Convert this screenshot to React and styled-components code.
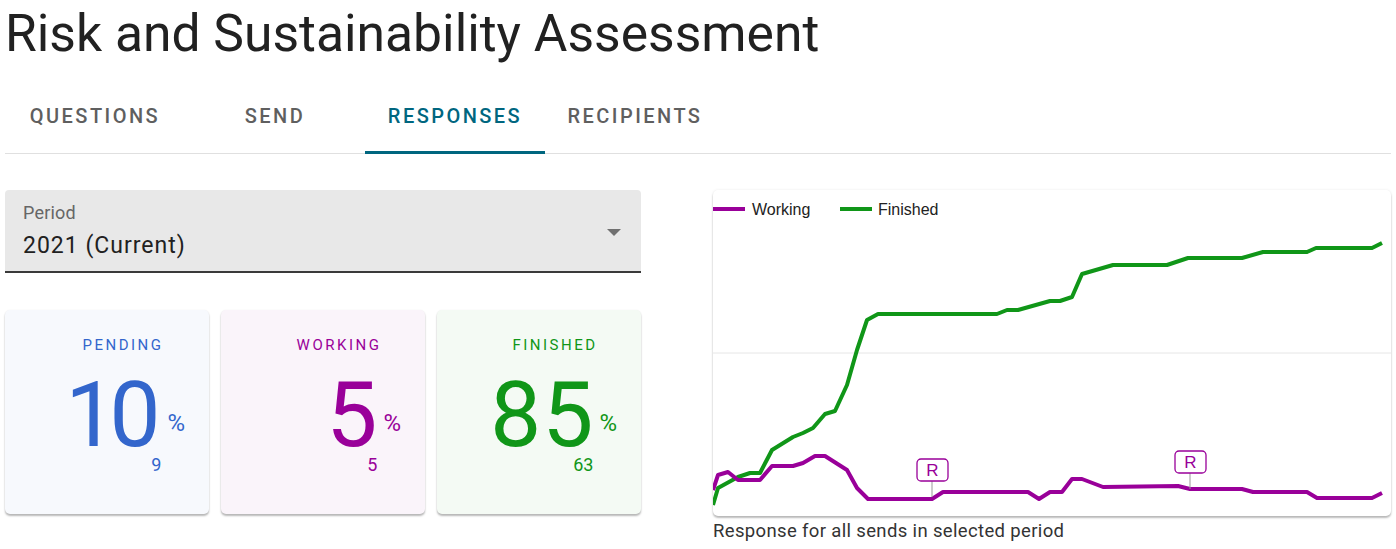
import React from 'react';
import styled, { createGlobalStyle } from 'styled-components';

const GlobalStyle = createGlobalStyle`
  body {
    margin: 0;
    background: #fff;
    font-family: Roboto, "Noto Sans", sans-serif;
  }
`;

const Page = styled.div`
  padding: 0 5px;
`;

const Title = styled.h1`
  margin: 3px 0 0 0;
  font-size: 51.6px;
  line-height: 62px;
  font-weight: 400;
  color: #212121;
`;

const TabBar = styled.div`
  display: flex;
  margin-top: 14px;
  border-bottom: 1px solid #e0e0e0;
`;

const Tab = styled.div`
  position: relative;
  min-width: 180px;
  height: 74px;
  display: flex;
  align-items: center;
  justify-content: center;
  font-size: 20px;
  font-weight: 500;
  letter-spacing: 2.45px;
  color: ${(p) => (p.$active ? '#00667f' : '#5f5f5f')};

  &::after {
    content: '';
    display: ${(p) => (p.$active ? 'block' : 'none')};
    position: absolute;
    left: 0;
    right: 0;
    bottom: -1px;
    height: 3px;
    background: #00667f;
  }
`;

const Content = styled.div`
  display: grid;
  grid-template-columns: 636px 1fr;
  column-gap: 72px;
  margin-top: 36px;
`;

const LeftColumn = styled.div`
  display: flex;
  flex-direction: column;
  gap: 37px;
`;

const Select = styled.div`
  position: relative;
  height: 83px;
  box-sizing: border-box;
  background: #e8e8e8;
  border-radius: 4px 4px 0 0;
  border-bottom: 2px solid #3a3a3a;
  padding: 14px 18px 0;
`;

const SelectLabel = styled.div`
  font-size: 18px;
  line-height: 18px;
  letter-spacing: 0.2px;
  color: #666;
`;

const SelectValue = styled.div`
  margin-top: 12px;
  font-size: 23px;
  line-height: 23px;
  letter-spacing: 1px;
  color: #212121;
`;

const Arrow = styled.svg`
  position: absolute;
  right: 20px;
  top: 39px;
`;

const Cards = styled.div`
  display: grid;
  grid-template-columns: repeat(3, 1fr);
  gap: 12px;
`;

const Card = styled.div`
  height: 204px;
  box-sizing: border-box;
  background: ${(p) => p.$bg};
  color: ${(p) => p.$color};
  border-radius: 5px;
  box-shadow: 0 2px 2px rgba(0, 0, 0, 0.28), 0 0 2px rgba(0, 0, 0, 0.06);
  padding: 28px 24px 0 0;
  display: flex;
  flex-direction: column;
`;

const CardLabel = styled.div`
  padding-left: 56px;
  text-align: center;
  font-size: 15px;
  line-height: 15px;
  letter-spacing: 2.5px;
`;

const ValueRow = styled.div`
  display: flex;
  justify-content: flex-end;
  margin-top: 17px;
`;

const ValueBlock = styled.div`
  display: flex;
  flex-direction: column;
  align-items: flex-end;
`;

const BigNumber = styled.div`
  font-size: 91px;
  line-height: 91px;
  font-variant-numeric: proportional-nums;
`;

const Count = styled.div`
  margin-top: -5px;
  font-size: 18px;
  line-height: 18px;
`;

const Percent = styled.div`
  margin: 41px 0 0 6px;
  font-size: 24px;
  line-height: 24px;
`;

const RightColumn = styled.div`
  display: flex;
  flex-direction: column;
`;

const ChartCard = styled.div`
  height: 326px;
  background: #fff;
  border-radius: 5px;
  box-shadow: 0 2px 2px rgba(0, 0, 0, 0.26), 0 0 3px rgba(0, 0, 0, 0.08);
  overflow: hidden;
`;

const Caption = styled.div`
  margin-top: 4px;
  font-size: 18.5px;
  line-height: 22px;
  letter-spacing: 0.35px;
  color: #333;
`;

const stats = [
  { label: 'PENDING', value: 10, count: 9, color: '#3366cc', bg: '#f7f9fd' },
  { label: 'WORKING', value: 5, count: 5, color: '#990099', bg: '#faf4fa' },
  { label: 'FINISHED', value: 85, count: 63, color: '#109618', bg: '#f4faf4' },
];

const finished = [
  [713, 505], [718, 488], [738, 477], [750, 473], [760, 473], [772, 450], [793, 437],
  [803, 433], [813, 428], [825, 414], [835, 411], [847, 385], [857, 350], [867, 320],
  [878, 314], [997, 314], [1007, 310], [1018, 310], [1050, 301], [1060, 301], [1072, 297],
  [1082, 274], [1113, 265], [1167, 265], [1188, 258], [1242, 258], [1263, 252], [1307, 252],
  [1316, 248], [1372, 248], [1382, 243],
];

const working = [
  [713, 490], [718, 475], [728, 472], [738, 480], [760, 480], [772, 466], [793, 466],
  [803, 463], [815, 456], [825, 456], [847, 470], [857, 488], [868, 499], [932, 499],
  [943, 492], [1028, 492], [1039, 499], [1050, 492], [1062, 492], [1072, 479], [1082, 479],
  [1103, 487], [1178, 486], [1190, 489], [1242, 489], [1253, 492], [1307, 492], [1317, 498],
  [1372, 498], [1382, 493],
];

// chart card sits at (713, 190) in the page
const toPoints = (pts) => pts.map(([x, y]) => `${x - 713},${y - 190}`).join(' ');

const Annotation = ({ x, top, stemTo }) => (
  <g>
    <line x1={x} y1={top + 22} x2={x} y2={stemTo} stroke="#999" strokeWidth="1" />
    <rect x={x - 15} y={top} width="31" height="22" rx="4" fill="#fff" stroke="#990099" strokeWidth="1.3" />
    <text x={x + 0.5} y={top + 17} textAnchor="middle" fontSize="17" fill="#990099" fontFamily="'Liberation Sans', Arial, sans-serif">
      R
    </text>
  </g>
);

const ResponseChart = () => (
  <svg width="678" height="326" viewBox="0 0 678 326">
    <line x1="0" y1="163" x2="678" y2="163" stroke="#e6e6e6" strokeWidth="1" />
    <g fontFamily="'Liberation Sans', Arial, sans-serif" fontSize="16" fill="#222">
      <line x1="0" y1="19" x2="32" y2="19" stroke="#990099" strokeWidth="4" />
      <text x="39" y="25">Working</text>
      <line x1="127" y1="19" x2="159" y2="19" stroke="#109618" strokeWidth="4" />
      <text x="165" y="25">Finished</text>
    </g>
    <polyline points={toPoints(finished)} fill="none" stroke="#109618" strokeWidth="4" strokeLinejoin="round" />
    <polyline points={toPoints(working)} fill="none" stroke="#990099" strokeWidth="4" strokeLinejoin="round" />
    <Annotation x={219} top={269} stemTo={307} />
    <Annotation x={477} top={261} stemTo={299} />
  </svg>
);

const App = () => (
  <Page>
    <GlobalStyle />
    <Title>Risk and Sustainability Assessment</Title>
    <TabBar>
      <Tab>QUESTIONS</Tab>
      <Tab>SEND</Tab>
      <Tab $active>RESPONSES</Tab>
      <Tab>RECIPIENTS</Tab>
    </TabBar>
    <Content>
      <LeftColumn>
        <Select>
          <SelectLabel>Period</SelectLabel>
          <SelectValue>2021 (Current)</SelectValue>
          <Arrow width="14" height="7" viewBox="0 0 14 7">
            <path d="M0 0h14L7 7z" fill="#707070" />
          </Arrow>
        </Select>
        <Cards>
          {stats.map((s) => (
            <Card key={s.label} $bg={s.bg} $color={s.color}>
              <CardLabel>{s.label}</CardLabel>
              <ValueRow>
                <ValueBlock>
                  <BigNumber>{s.value}</BigNumber>
                  <Count>{s.count}</Count>
                </ValueBlock>
                <Percent>%</Percent>
              </ValueRow>
            </Card>
          ))}
        </Cards>
      </LeftColumn>
      <RightColumn>
        <ChartCard>
          <ResponseChart />
        </ChartCard>
        <Caption>Response for all sends in selected period</Caption>
      </RightColumn>
    </Content>
  </Page>
);

export default App;
